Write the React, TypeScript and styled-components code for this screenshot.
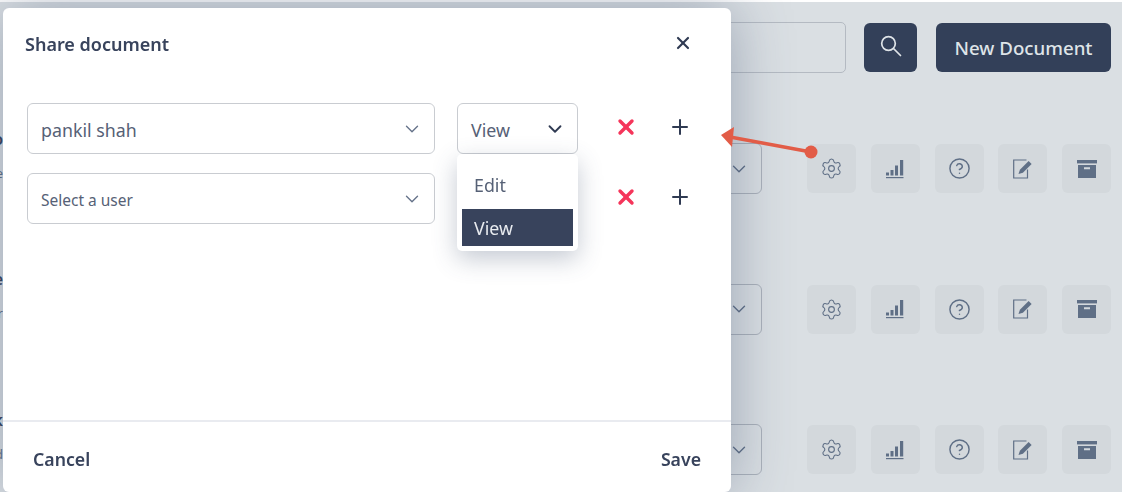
import styled, { createGlobalStyle } from "styled-components";
import { ChevronDown, CircleHelp, Plus, Settings, X } from "lucide-react";

const ink = "#38435c";
const slate = "#334059";
const muted = "#5f6f86";

const documents = [
  { title: "Document info", sub: "Shared file" },
  { title: "Purchase note", sub: "Draft for" },
  { title: "Quarterly task", sub: "Updated" },
];

const SearchIcon = () => (
  <svg width="22" height="22" viewBox="0 0 22 22" fill="none" stroke="currentColor" strokeWidth="1.7">
    <circle cx="8.5" cy="8.5" r="6.8" />
    <path d="M13.5 13.5L20.5 20.5" strokeLinecap="round" />
  </svg>
);

const BarsIcon = () => (
  <svg width="20" height="20" viewBox="0 0 20 20" fill={muted}>
    <rect x="1" y="13.5" width="3" height="3" />
    <rect x="5.5" y="11" width="3" height="5.5" />
    <rect x="10" y="6.5" width="3" height="10" />
    <rect x="15" y="1" width="3.2" height="15.5" />
    <rect x="1" y="18" width="17.5" height="1.2" />
  </svg>
);

const NoteIcon = () => (
  <svg width="20" height="20" viewBox="0 0 20 20" fill="none">
    <path d="M13.5 1H.7v18h13.8v-8.5" stroke={muted} strokeWidth="1.2" />
    <path d="M5.500 15l1.400-4.300L15.600 2l3 3-8.700 8.700z" fill={muted} />
  </svg>
);

const BoxIcon = () => (
  <svg width="20" height="20" viewBox="0 0 20 20" fill={muted}>
    <rect x="0" y="1" width="20" height="3.4" />
    <path d="M1 6h18v13H1zM7 8.200v2h6v-2z" fillRule="evenodd" />
  </svg>
);

const GlobalStyle = createGlobalStyle`
  html, body {
    margin: 0;
    padding: 0;
    background: #fff;
  }
  body {
    font-family: "Noto Sans", "Open Sans", sans-serif;
  }
`;

const Screen = styled.div`
  position: relative;
  width: 1122px;
  height: 492px;
  overflow: hidden;
  filter: blur(0.4px);
`;

const Backdrop = styled.main`
  box-sizing: border-box;
  height: 490px;
  margin-top: 2px;
  padding: 20px 11px 0 0;
  background: #dadfe3;
  display: flex;
  flex-direction: column;
`;

const TopBar = styled.header`
  display: flex;
  justify-content: flex-end;
  align-items: center;
  gap: 19px;
  height: 51px;
`;

const SearchField = styled.div`
  box-sizing: border-box;
  width: 300px;
  height: 51px;
  margin-right: -1px;
  border: 1px solid #b4bac2;
  border-radius: 5px;
`;

const SearchButton = styled.button`
  width: 53px;
  height: 49px;
  border: 0;
  border-radius: 6px;
  background: ${slate};
  color: #dfe4e8;
  display: flex;
  align-items: center;
  justify-content: center;
  padding: 0 0 3px;
`;

const NewButton = styled.button`
  width: 175px;
  height: 49px;
  border: 0;
  border-radius: 6px;
  background: ${slate};
  color: #dfe4e8;
  font: 500 18.7px "Noto Sans", sans-serif;
  padding: 0;
`;

const DocList = styled.section`
  display: flex;
  flex-direction: column;
  gap: 89.5px;
  margin-top: 70px;
`;

const DocRow = styled.article`
  display: flex;
  align-items: center;
  height: 51px;
`;

const DocInfo = styled.div`
  width: 3px;
  display: flex;
  flex-direction: column;
  align-items: flex-end;
  gap: 14px;
  margin-bottom: 28px;
  white-space: nowrap;
  margin-right: auto;
`;

const DocTitle = styled.span`
  font-size: 16px;
  font-weight: 600;
  color: ${slate};
`;

const DocSub = styled.span`
  font-size: 13px;
  color: ${muted};
`;

const RowSelect = styled.div`
  box-sizing: border-box;
  width: 120px;
  height: 51px;
  border: 1px solid #aab1ba;
  border-radius: 6px;
  margin-right: 45px;
  display: flex;
  align-items: center;
  justify-content: flex-end;
  padding-right: 11px;
  color: ${muted};
`;

const IconGroup = styled.div`
  display: flex;
  gap: 14.75px;
`;

const IconTile = styled.button`
  width: 49px;
  height: 49px;
  border: 0;
  padding: 0;
  border-radius: 6px;
  background: #d3d8dc;
  color: ${muted};
  display: flex;
  align-items: center;
  justify-content: center;
`;

const Modal = styled.div`
  position: absolute;
  left: 3px;
  top: 8px;
  width: 728px;
  height: 484px;
  background: #fff;
  border-radius: 6px;
  box-shadow: 0 0 60px rgba(62, 78, 110, 0.42);
  display: flex;
  flex-direction: column;
`;

const ModalHead = styled.header`
  display: flex;
  align-items: center;
  justify-content: space-between;
  height: 71px;
  padding: 0 38px 0 22px;
`;

const ModalTitle = styled.h2`
  margin: 0;
  font-size: 18px;
  font-weight: 600;
  color: ${ink};
`;

const IconButton = styled.button<{ $tone?: string }>`
  border: 0;
  background: none;
  padding: 0;
  display: flex;
  color: ${(p) => p.$tone ?? "#2f3a52"};
`;

const CloseButton = styled(IconButton)`
  margin-bottom: 2px;
`;

const ModalBody = styled.div`
  flex: 1;
  padding: 24px 24px 0;
  display: flex;
  flex-direction: column;
  gap: 19px;
`;

const ShareRow = styled.div`
  position: relative;
  display: flex;
  align-items: center;
  height: 51px;
`;

const Select = styled.div<{ $width: number; $small?: boolean }>`
  box-sizing: border-box;
  width: ${(p) => p.$width}px;
  height: 51px;
  border: 1px solid #c9ccd1;
  border-radius: 6px;
  background: #fff;
  display: flex;
  align-items: center;
  justify-content: space-between;
  padding: 0 11px 0 13px;
  font-size: ${(p) => (p.$small ? 15.5 : 17.8)}px;
  color: #566176;
`;

const SelectText = styled.span`
  padding-top: 2px;
`;

const RoleSlot = styled.div`
  position: relative;
  margin-left: 22px;
  margin-right: 36px;
  width: 121px;
  height: 51px;
`;

const Menu = styled.ul`
  position: absolute;
  z-index: 2;
  top: 51px;
  left: 0;
  box-sizing: border-box;
  width: 121px;
  height: 97px;
  margin: 0;
  padding: 5px;
  list-style: none;
  background: #fff;
  border-radius: 5px;
  box-shadow: 0 8px 24px rgba(62, 78, 110, 0.3);
`;

const MenuItem = styled.li<{ $active?: boolean }>`
  box-sizing: border-box;
  height: ${(p) => (p.$active ? 37 : 50)}px;
  display: flex;
  align-items: center;
  padding: ${(p) => (p.$active ? "0 0 0 12px" : "2px 0 0 12px")};
  font-size: 17.8px;
  background: ${(p) => (p.$active ? ink : "transparent")};
  color: ${(p) => (p.$active ? "#e8ebef" : "#566176")};
`;

const RowActions = styled.div`
  display: flex;
  align-items: center;
  gap: 30px;
  margin-bottom: 3px;
`;

const ModalFoot = styled.footer`
  box-sizing: border-box;
  height: 72px;
  border-top: 2px solid #e9ebf0;
  display: flex;
  align-items: center;
  justify-content: space-between;
  padding: 3px 30px 0;
`;

const FootButton = styled.button`
  border: 0;
  background: none;
  padding: 0;
  font: 600 17.7px "Noto Sans", sans-serif;
  color: ${ink};
`;

const Pointer = styled.svg`
  position: absolute;
  left: 715px;
  top: 120px;
`;

const App = () => (
  <>
    <GlobalStyle />
    <Screen>
      <Backdrop>
        <TopBar>
          <SearchField />
          <SearchButton>
            <SearchIcon />
          </SearchButton>
          <NewButton>New Document</NewButton>
        </TopBar>
        <DocList>
          {documents.map((doc) => (
            <DocRow key={doc.title}>
              <DocInfo>
                <DocTitle>{doc.title}</DocTitle>
                <DocSub>{doc.sub}</DocSub>
              </DocInfo>
              <RowSelect>
                <ChevronDown size={22} strokeWidth={1.5} />
              </RowSelect>
              <IconGroup>
                <IconTile>
                  <Settings size={23} strokeWidth={1.15} />
                </IconTile>
                <IconTile>
                  <BarsIcon />
                </IconTile>
                <IconTile>
                  <CircleHelp size={23} strokeWidth={1.5} />
                </IconTile>
                <IconTile>
                  <NoteIcon />
                </IconTile>
                <IconTile>
                  <BoxIcon />
                </IconTile>
              </IconGroup>
            </DocRow>
          ))}
        </DocList>
      </Backdrop>

      <Modal>
        <ModalHead>
          <ModalTitle>Share document</ModalTitle>
          <CloseButton>
            <X size={20} strokeWidth={2.6} />
          </CloseButton>
        </ModalHead>
        <ModalBody>
          <ShareRow>
            <Select $width={408}>
              <SelectText>pankil shah</SelectText>
              <ChevronDown size={22} strokeWidth={1.5} color="#66738a" />
            </Select>
            <RoleSlot>
              <Select $width={121}>
                <SelectText>View</SelectText>
                <ChevronDown size={22} strokeWidth={2} color="#2f3a52" />
              </Select>
              <Menu>
                <MenuItem>Edit</MenuItem>
                <MenuItem $active>View</MenuItem>
              </Menu>
            </RoleSlot>
            <RowActions>
              <IconButton $tone="#f5355a">
                <X size={24} strokeWidth={3.4} />
              </IconButton>
              <IconButton>
                <Plus size={24} strokeWidth={2} />
              </IconButton>
            </RowActions>
          </ShareRow>
          <ShareRow>
            <Select $width={408} $small>
              <SelectText>Select a user</SelectText>
              <ChevronDown size={22} strokeWidth={1.5} color="#66738a" />
            </Select>
            <RoleSlot />
            <RowActions>
              <IconButton $tone="#f5355a">
                <X size={24} strokeWidth={3.4} />
              </IconButton>
              <IconButton>
                <Plus size={24} strokeWidth={2} />
              </IconButton>
            </RowActions>
          </ShareRow>
        </ModalBody>
        <ModalFoot>
          <FootButton>Cancel</FootButton>
          <FootButton>Save</FootButton>
        </ModalFoot>
      </Modal>

      <Pointer width="110" height="42" viewBox="0 0 110 42">
        <path d="M6 15 L19 7 L17 27 Z" fill="#e25c47" />
        <path d="M15 17 L96 32" stroke="#e25c47" strokeWidth="3.4" />
        <circle cx="96" cy="32" r="6.5" fill="#e25c47" />
      </Pointer>
    </Screen>
  </>
);

export default App;
